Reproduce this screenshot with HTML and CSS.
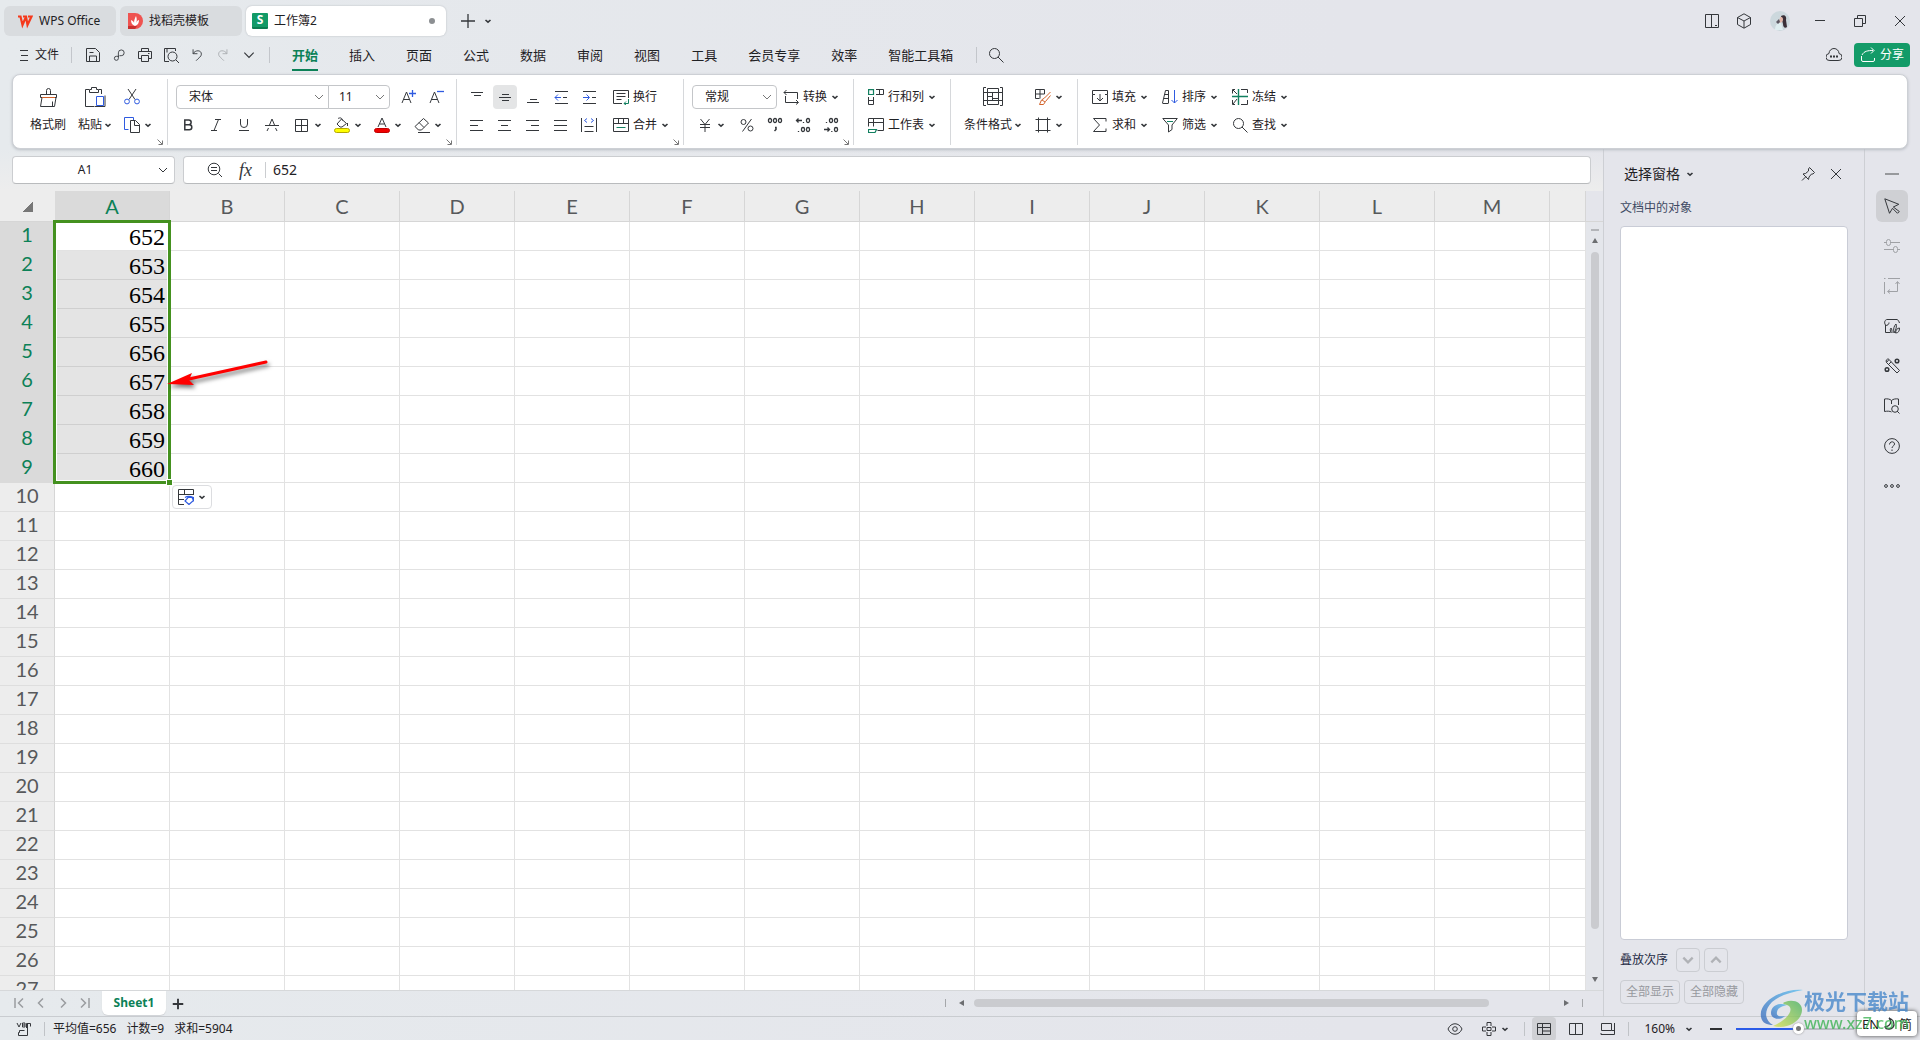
FILE: index.html
```html
<!DOCTYPE html>
<html lang="zh-CN">
<head>
<meta charset="utf-8">
<title>工作簿2 - WPS Office</title>
<link rel="stylesheet" href="styles.css">
</head>
<body>
<svg class="defs" aria-hidden="true">
  <symbol id="chev" viewBox="0 0 8 8"><path d="M1.500 3 4 5.200 6.500 3" stroke-width="1.600"/></symbol>
  <symbol id="chev-l" viewBox="0 0 12 12"><path d="M2 4l4 4 4-4"/></symbol>
  <symbol id="launch" viewBox="0 0 6 6"><path d="M.5.5l4.500 4.500M5.500 1.500v4h-4"/></symbol>
  <symbol id="plus" viewBox="0 0 16 16"><path d="M8 1v14M1 8h14"/></symbol>
  <symbol id="x" viewBox="0 0 16 16"><path d="M3 3l10 10M13 3 3 13"/></symbol>
  <symbol id="wps" viewBox="0 0 16 14"><path d="M1 2.500h2.500l2 8.500L8.500 4M6 2.500h3l1.500 8.500 4-8.500H11" fill="none" stroke="#f5391c" stroke-width="2.200"/></symbol>
  <symbol id="docer" viewBox="0 0 16 16"><path d="M1 0h7a7.500 7.500 0 0 1 0 16H1z" fill="#ef5350" stroke="none"/><path d="M1 13h9l-2 3H1z" fill="#c9302e" stroke="none"/><path d="M8 13C5 12 4 10 4 7c2 1 3 2 3 3 0-3 1-5 2-7 1 3 1 5 0 7 1-2 2-3 3-3 0 3-1 5-4 6z" fill="#fff" stroke="none"/></symbol>
  <symbol id="menu" viewBox="0 0 10 12"><path d="M1 1.500h8M2 6.500h7M1 11.500h8" /></symbol>
  <symbol id="save" viewBox="0 0 16 16"><path d="M1.500 14.500v-13h9l4 4v9zM4.500 14v-5h7v5M4.500 5.500h4"/></symbol>
  <symbol id="link" viewBox="0 0 16 16"><path d="M8 9.500H5a2.300 2.300 0 1 0 2.300 2.300V5.500A3.300 3.300 0 1 1 10.500 8.800H8.500"/></symbol>
  <symbol id="print" viewBox="0 0 16 16"><path d="M4.500 4.500v-3h7v3M4.500 11.500h-3v-7h13v7h-3M4.500 8.500h7v6h-7zM11 6.500h1.500"/></symbol>
  <symbol id="preview" viewBox="0 0 16 16"><path d="M6 14.500H1.500v-13h11V4M4 1.500v4M13 13l3 3"/><circle cx="9.500" cy="9.500" r="4.500"/></symbol>
  <symbol id="undo" viewBox="0 0 16 16"><path d="M3.500 1.500v5h5M3.500 6.500C6 2 13 2 13 7c0 3-3 4-6 7.500"/></symbol>
  <symbol id="redo" viewBox="0 0 16 16"><path d="M12.500 1.500v5h-5M12.500 6.500C10 2 3 2 3 7c0 3 3 4 6 7.500"/></symbol>
  <symbol id="search" viewBox="0 0 16 16"><circle cx="6.500" cy="6.500" r="5"/><path d="M10 10l5.500 5.500"/></symbol>
  <symbol id="panel" viewBox="0 0 16 16"><path d="M1.500 1.500h13v13h-13zM7.500 1.500v13M11 12.500h2"/></symbol>
  <symbol id="cube" viewBox="0 0 16 16"><path d="M8 .8l6.500 3.700v7L8 15.200l-6.500-3.700v-7zM1.500 4.500 8 8l6.500-3.500M8 8v7"/></symbol>
  <symbol id="min" viewBox="0 0 16 16"><path d="M3 7.500h10"/></symbol>
  <symbol id="restore" viewBox="0 0 16 16"><path d="M2.500 5.500h8v8h-8zM5.500 5.500v-3h8v8h-3"/></symbol>
  <symbol id="cloud" viewBox="0 0 16 16"><path d="M4 13.500A3.500 3.500 0 0 1 3 6.500 5 5 0 0 1 13 6.500a3.500 3.500 0 0 1-1 7z"/><path d="M4 9.500h2M7 9.500h2M10 9.500h2" stroke-width="2"/></symbol>
  <symbol id="share" viewBox="0 0 16 16"><path d="M1.500 9v4a1.500 1.500 0 0 0 1.500 1.500h10a1.500 1.500 0 0 0 1.500-1.500v-2M2 8c2-4 6-4.500 11-4.500M11 .5l3 3-3 3"/></symbol>
  <symbol id="brush" viewBox="0 0 20 20"><path d="M8.500 7.500v-4a2 2 0 0 1 4 0v4M2.500 7.500h16v3h-16zM4 10.500l-1.500 9h14l1.500-9M14.500 14.500v5"/><path d="M4 10.500h13" stroke="#d2622a"/></symbol>
  <symbol id="paste" viewBox="0 0 22 20"><path d="M5 2.500H1.500v17h9M15 2.500h2.500V7M5.500 2.500h2v-2h5v2h2v3h-9z"/><path d="M12.500 9.500h7v9h-7z" stroke="#2f5be0"/><path d="M11 19.500h10v-11"/></symbol>
  <symbol id="cut" viewBox="0 0 16 16"><path d="M4 0l7 10.500M12 0 5 10.500"/><circle cx="3" cy="12.500" r="2.400" stroke="#2f5be0"/><circle cx="13" cy="12.500" r="2.400" stroke="#2f5be0"/></symbol>
  <symbol id="copy" viewBox="0 0 16 16"><path d="M4.500 12.500h-4v-12h9V3" stroke="#2f5be0"/><path d="M6.500 3.500h5l4 4v8h-9zM10.500 3.500v5h5"/></symbol>
  <symbol id="aplus" viewBox="0 0 16 16"><path d="M1 14 5.500 3 10 14M2.500 10.500h6"/><path d="M11.500 1v7M8 4.500h7" stroke="#2f5be0" stroke-width="1.300"/></symbol>
  <symbol id="aminus" viewBox="0 0 16 16"><path d="M1 14 5.500 3 10 14M2.500 10.500h6"/><path d="M8 2.500h7" stroke="#2f5be0" stroke-width="1.300"/></symbol>
  <symbol id="bold" viewBox="0 0 16 16"><path d="M4.800 3h4a2.300 2.300 0 0 1 0 4.700h-4zM4.800 7.700h4.500a2.500 2.500 0 0 1 0 5h-4.500z" stroke-width="1.500"/></symbol>
  <symbol id="italic" viewBox="0 0 16 16"><path d="M7 2.500h6M3 13.500h6M10.500 2.500l-4.500 11"/></symbol>
  <symbol id="under" viewBox="0 0 16 16"><path d="M4.500 2v5a3.500 3.500 0 0 0 7 0V2M3 13.500h10"/></symbol>
  <symbol id="strike" viewBox="0 0 16 16"><path d="M1 8.500h14M5.500 8 8 2l2.500 6M3 14l1.500-3M13 14l-1.500-3"/></symbol>
  <symbol id="border" viewBox="0 0 16 16"><path d="M1.500 2.500h12v12h-12zM7.500 2.500v12M1.500 8.500h12"/></symbol>
  <symbol id="fill" viewBox="0 0 16 16"><path d="M7.500 2l5 4.500-4.500 3.500h-2L3 7zM4 1.500c2-1 4-1 4.500 2M13.500 6v3"/><rect x=".5" y="11.500" width="15" height="4" rx="2" fill="#ffff00" stroke="#b5a800"/></symbol>
  <symbol id="fcolor" viewBox="0 0 16 16"><path d="M4 10 8 1l4 9M5.500 7h5"/><rect x=".5" y="11.500" width="15" height="4" rx="2" fill="#f00000" stroke="#c00000"/></symbol>
  <symbol id="eraser" viewBox="0 0 16 16"><path d="M9.500 1.500l5 4.500-7 7H4.500L1 9.500zM5 5.500l5 5M4 15.500h12"/></symbol>
  <symbol id="vtop" viewBox="0 0 16 16"><path d="M2 3.500h12M5 6.500h7"/></symbol>
  <symbol id="vmid" viewBox="0 0 16 16"><path d="M5 5.500h7M2 8.500h12M5 11.500h7"/></symbol>
  <symbol id="vbot" viewBox="0 0 16 16"><path d="M5 10.500h7M2 13.500h12"/></symbol>
  <symbol id="outdent" viewBox="0 0 16 16"><path d="M2 2.500h13M10 8.500h4M2 14.500h13"/><path d="M8 8.500H2M5 5.500l-3 3 3 3" stroke="#2f5be0"/></symbol>
  <symbol id="indent" viewBox="0 0 16 16"><path d="M2 2.500h13M11 8.500h4M2 14.500h13"/><path d="M2 8.500h6M5.500 5.500l3 3-3 3" stroke="#2f5be0"/></symbol>
  <symbol id="left" viewBox="0 0 16 16"><path d="M1 3.500h13M1 8.500h8M1 13.500h13"/></symbol>
  <symbol id="center" viewBox="0 0 16 16"><path d="M1 3.500h13M4 8.500h7M1 13.500h13"/></symbol>
  <symbol id="right" viewBox="0 0 16 16"><path d="M1 3.500h13M6 8.500h8M1 13.500h13"/></symbol>
  <symbol id="just" viewBox="0 0 16 16"><path d="M1 3.500h13M1 8.500h13M1 13.500h13"/></symbol>
  <symbol id="dist" viewBox="0 0 16 16"><path d="M.5 1v14M15.500 1v14M3.500 9.500h9M3.500 14.500h9"/><path d="M6 1.500l-2.500 2 2.500 2M10 1.500l2.500 2-2.500 2" stroke="#2f5be0"/></symbol>
  <symbol id="wrap" viewBox="0 0 16 16"><path d="M15.500 9V1.500H.5v13H9M3.500 4.500h9M3.500 7.500h9M3.500 10.500h5"/><path d="M15.500 10v4.500H11M13 12.500l-2 2 2 1.500" stroke="#128060"/></symbol>
  <symbol id="merge" viewBox="0 0 16 16"><path d="M.5 1.500h15v13H.5zM.5 6.500h15M5.500 1.500v5M10.500 1.500v5"/><path d="M3.500 10.500h9" stroke="#128060"/></symbol>
  <symbol id="convert" viewBox="0 0 16 16"><path d="M3.500 1 1 3.500 3.500 6M1 3.500h13.500V10M2.500 7v6.500H15M13 11l2.500 2.500L13 15.500"/></symbol>
  <symbol id="yen" viewBox="0 0 16 16"><path d="M3.500 2 8 7.500 12.500 2M3 7.500h10M3 10.500h10M8 7.500V15"/></symbol>
  <symbol id="pct" viewBox="0 0 16 16"><circle cx="4.500" cy="5" r="2.500"/><circle cx="11.500" cy="11.500" r="2.500"/><path d="M12.500 2l-9 12.500"/></symbol>
  <symbol id="thou" viewBox="0 0 16 16"><g stroke-width="1.300"><rect x="1.500" y="1.500" width="3" height="4" rx="1.500"/><rect x="6.500" y="1.500" width="3" height="4" rx="1.500"/><rect x="11.500" y="1.500" width="3" height="4" rx="1.500"/></g><path d="M8 10.500h1v2L7.500 14" stroke-width="1.500"/></symbol>
  <symbol id="decinc" viewBox="0 0 16 16"><g stroke-width="1.300"><rect x="11.500" y="1.500" width="3" height="4" rx="1.500"/><rect x="6.500" y="10.500" width="3" height="4" rx="1.500"/><rect x="11.500" y="10.500" width="3" height="4" rx="1.500"/><path d="M3.500 1.500l-2 2 2 2M2 3.500h5M8.500 5v1M3.500 14v1"/></g></symbol>
  <symbol id="decdec" viewBox="0 0 16 16"><g stroke-width="1.300"><rect x="6.500" y="1.500" width="3" height="4" rx="1.500"/><rect x="11.500" y="1.500" width="3" height="4" rx="1.500"/><rect x="11.500" y="10.500" width="3" height="4" rx="1.500"/><path d="M4.500 10.500l2 2-2 2M1 12.500h5M3.500 5v1M8.800 14v1"/></g></symbol>
  <symbol id="rowcol" viewBox="0 0 16 16"><path d="M8 .5h7.500v5H8M11.500.5v5M.5 8v7.500h5V8M.5 11.500h5"/><path d="M.6.600h4.900v4.900H.6z" stroke="#128060" stroke-width="1.200"/></symbol>
  <symbol id="wsheet" viewBox="0 0 16 16"><path d="M.5 9.500v-8h15v12h-6M.5 5.500h15M5.500 1.500v8"/><path d="M.5 12.500h8l-1.500 3H.5z" stroke="#128060" stroke-width="1.200"/></symbol>
  <symbol id="cond" viewBox="0 0 20 20"><path d="M3 .5H.5v18H3M17 .5h2.500v18H17M4.500 1.500h11v4h-11zM4.500 13.500h11v4h-11zM4.500 9.500h5M.5 5.500h4M15.500 5.500h4M.5 13.500h4M15.500 13.500h4M9.500 5.500v4M4.500 5.500v8M15.500 5.500v8M9.500 11.500h6M9.500 9.500v4"/></symbol>
  <symbol id="tstyle" viewBox="0 0 16 16"><path d="M9.500 5V.5H.5v9h4M5 .5v9M.5 5h9"/><path d="M15.500 3 9.500 9l-3 2-2 4.500h4l2-3 5-6M7 11l3 2" stroke="#d2622a"/></symbol>
  <symbol id="cell" viewBox="0 0 16 16"><path d="M3.500.5v15M12.500.5v15M.5 2.500h15M.5 13.500h15"/></symbol>
  <symbol id="fillin" viewBox="0 0 16 16"><path d="M3 5.500H.5v-4h15v4H13M.5 5.500v9h15v-9M8 5v7M5 9l3 3 3-3"/></symbol>
  <symbol id="sum" viewBox="0 0 16 16"><path d="M14 4.500v-3H1.500l6 6.500-6 6.500H14v-3"/></symbol>
  <symbol id="sort" viewBox="0 0 16 16"><path d="M.5 14 3.500 1.500h3V14M.5 14.500h6M2 9.500h4.500M2.500 5.500h4"/><path d="M12.500 1v13M9.500 11l3 3 3-3" stroke="#2f5be0"/></symbol>
  <symbol id="filter" viewBox="0 0 16 16"><path d="M.8 1.500h14.500L10 8v4.500l-3.500 2.500V8z"/><path d="M5 4.500h6" stroke="#128060"/></symbol>
  <symbol id="freeze" viewBox="0 0 16 16"><path d="M3 .5H.5v4M9 .5h6.500V4M.5 11v4.500H3M15.500 11v4.500H9M1 1l4 4M5 10l-4 5"/><path d="M6.500 0v16M0 7.500h16" stroke="#128060" stroke-width="1.400"/></symbol>
  <symbol id="zoomout" viewBox="0 0 16 16"><circle cx="7" cy="7" r="5.800"/><path d="M4 5.500h6M4 8.500h6M11.500 11.500l3.500 3.500"/></symbol>
  <symbol id="pin" viewBox="0 0 16 16"><path d="M9.500 1.500l5 5-1.500 1.500-1.500 0-2.500 3-.5 2.500L3 8l2.500-.5 3-2.500V3zM6 10.500 2 14.500"/></symbol>
  <symbol id="arrow" viewBox="0 0 16 16"><path d="M.8.800l14 5.500-5.500 2.700 6 4.500-1.800 1.800-5-5-3 5z"/></symbol>
  <symbol id="sliders" viewBox="0 0 16 16"><path d="M0 4.500h2M7 4.500h9M0 11.500h9M14 11.500h2"/><rect x="2.500" y="1.500" width="4" height="6" rx="2"/><rect x="9.500" y="8.500" width="4" height="6" rx="2"/></symbol>
  <symbol id="transp" viewBox="0 0 16 16"><path d="M4 .5h12M.5 4v12M0 .5h1.500M13.500 4v9.500H4M11.500 6l2-2.500 2 2.500M6 11.500l-2.500 2L6 15.500"/></symbol>
  <symbol id="shop" viewBox="0 0 16 16"><path d="M6 14.500H1.500V7C-.5 4 1.500 1.500 3 1.500h10c1 0 2 2 2.500 3.500M1.500 7.500c2 0 3.500-1 3.500-3"/><path d="M7 15c-1-3-1-4 0-5 1 1 1 3 1 5M10 15c-1-4 0-7 2-9 1 2 0 6-2 9zM11.500 15c0-3 2-5 4-5 0 3-1 5-4 5z"/></symbol>
  <symbol id="tools" viewBox="0 0 16 16"><path d="M2.500 4.500 5 1.500 15.500 12.500 13 15zM2.500 4.500C1 2 4 0 5 1.500M4.500 6.500 7.200 3.800"/><circle cx="13" cy="3" r="1.800" stroke-width="1.500"/><circle cx="3" cy="11.500" r="1.800" stroke-width="1.500"/></symbol>
  <symbol id="book" viewBox="0 0 16 16"><path d="M7.500 14C6 13 3 13 .5 13.500V1C3 .5 6 1 7.500 2.500 9 1 12 .5 14.500 1v6M7.500 2.500V6M13 13l2.500 2.500"/><circle cx="11" cy="11" r="3.300"/></symbol>
  <symbol id="help" viewBox="0 0 16 16"><circle cx="8" cy="8" r="7.400"/><path d="M5.500 6.500c0-3.500 5-3.500 5-.5C10.500 8 8 8 8 10M8 11.500v1.500"/></symbol>
  <symbol id="more" viewBox="0 0 16 16"><circle cx="2" cy="8" r="1.400"/><circle cx="8" cy="8" r="1.400"/><circle cx="14" cy="8" r="1.400"/></symbol>
  <symbol id="afill" viewBox="0 0 16 16"><path d="M15.500 6V.5H.5v15H6M.5 5.500h15M.5 10.500H6M6.500.5v5"/><path d="M7 8.500c3-2 6-1 8.500 0v4M11 15.500l-4-3.500 3-3.500h4l1.500 3z" stroke="#2f5be0" stroke-width="1.200"/></symbol>
  <symbol id="prev" viewBox="0 0 10 12"><path d="M7 1.500 2.500 6 7 10.500"/></symbol>
  <symbol id="next" viewBox="0 0 10 12"><path d="M3 1.500 7.500 6 3 10.500"/></symbol>
  <symbol id="first" viewBox="0 0 10 12"><path d="M1 1v10M9 1.500 4.500 6 9 10.500"/></symbol>
  <symbol id="last" viewBox="0 0 10 12"><path d="M9 1v10M1 1.500 5.500 6 1 10.500"/></symbol>
  <symbol id="macro" viewBox="0 0 16 16"><path d="M1 2l2 4 2-4M6.500 2h2.500v4H6.500zM6.500 4H9M10.500 7V2.500h4v3M11.500 3v9M3.500 9.500h5M3.500 9.500v2h-1v3h9v-3"/></symbol>
  <symbol id="eye" viewBox="0 0 16 16"><path d="M1 8c3-7 11-7 14 0-3 7-11 7-14 0z"/><circle cx="8" cy="8" r="2.300"/></symbol>
  <symbol id="cross" viewBox="0 0 16 16"><path d="M6 5V1.500h4V5M6 11v3.500h4V11M5 6H1.500v4H5M11 6h3.500v4H11M6 6.500h4v3H6z"/></symbol>
  <symbol id="vnorm" viewBox="0 0 16 16"><path d="M1.500 2.500h13v11h-13zM1.500 6.500h13M6.500 2.500v11M6.500 10h8"/></symbol>
  <symbol id="vpage" viewBox="0 0 16 16"><path d="M1.500 2.500h13v11h-13zM7.500 2.500v11"/></symbol>
  <symbol id="vread" viewBox="0 0 16 16"><path d="M1.500 2.500h10v7h-10zM14.500 2v11.500H1V12M14.500 9.500h-3"/></symbol>
  <symbol id="moon" viewBox="0 0 16 16"><path d="M8 2c3 3 2 8-4 9 1 3 8 3 9-2 0-3-2-6-5-7z" stroke-width="1.300"/></symbol>
</svg>

<header class="titlebar">
  <nav class="doc-tabs">
    <button class="doc-tab home"><svg class="i16"><use href="#wps"/></svg>WPS Office</button>
    <button class="doc-tab docer"><svg class="i16"><use href="#docer"/></svg>找稻壳模板</button>
    <button class="doc-tab current"><span class="s-logo">S</span>工作簿2<span class="dot"></span></button>
  </nav>
  <button class="new-tab" aria-label="新建"><svg class="i16"><use href="#plus"/></svg></button>
  <button class="tab-list" aria-label="标签列表"><svg class="chev"><use href="#chev"/></svg></button>
  <div class="window-tools">
    <button aria-label="侧栏"><svg class="i16"><use href="#panel"/></svg></button>
    <button aria-label="应用"><svg class="i16"><use href="#cube"/></svg></button>
    <button class="avatar-btn" aria-label="账户"><svg class="avatar" viewBox="0 0 20 20"><circle cx="10" cy="10" r="10" fill="#ccd8dd"/><path d="M11 5c3-2 6 0 5 4l1 7c-2 2-4 0-4-3z" fill="#3a3038"/><path d="M10 6.500c2-1 3 0 3 2s-2 4-4 3z" fill="#e3b8ab"/><path d="M5 19c0-5 3-8 6-7l2 7z" fill="#dfeef0"/><path d="M6 11l3-3 1 3-2 2z" fill="#5c5862"/></svg></button>
    <button class="win" aria-label="最小化"><svg class="i16"><use href="#min"/></svg></button>
    <button class="win" aria-label="还原"><svg class="i16"><use href="#restore"/></svg></button>
    <button class="win" aria-label="关闭"><svg class="i16"><use href="#x"/></svg></button>
  </div>
</header>

<div class="menubar">
  <button class="file"><svg class="i-menu"><use href="#menu"/></svg>文件</button>
  <span class="sep"></span>
  <div class="quick">
    <button aria-label="保存"><svg class="i16"><use href="#save"/></svg></button>
    <button aria-label="输出"><svg class="i14"><use href="#link"/></svg></button>
    <button aria-label="打印"><svg class="i16"><use href="#print"/></svg></button>
    <button aria-label="打印预览"><svg class="i16"><use href="#preview"/></svg></button>
    <button aria-label="撤销"><svg class="i14"><use href="#undo"/></svg></button>
    <button aria-label="恢复" class="dim"><svg class="i14"><use href="#redo"/></svg></button>
    <button aria-label="更多"><svg class="i14"><use href="#chev-l"/></svg></button>
  </div>
  <span class="sep"></span>
  <nav class="menu-tabs">
    <a href="#" class="on">开始</a><a href="#">插入</a><a href="#">页面</a><a href="#">公式</a><a href="#">数据</a><a href="#">审阅</a><a href="#">视图</a><a href="#">工具</a><a href="#">会员专享</a><a href="#">效率</a><a href="#">智能工具箱</a>
  </nav>
  <span class="sep"></span>
  <button class="find" aria-label="搜索"><svg class="i16"><use href="#search"/></svg></button>
  <button class="cloud" aria-label="云同步"><svg class="i16"><use href="#cloud"/></svg></button>
  <button class="share"><svg class="i16"><use href="#share"/></svg>分享</button>
</div>

<section class="ribbon" aria-label="开始">
  <div class="group g-clip">
    <div class="blocks">
      <button class="big"><span><svg class="i20"><use href="#brush"/></svg></span><span>格式刷</span></button>
      <button class="big"><span><svg class="i22"><use href="#paste"/></svg></span><span class="lbl">粘贴<svg class="chev"><use href="#chev"/></svg></span></button>
      <div class="stack">
        <div class="row"><button aria-label="剪切"><svg class="i16"><use href="#cut"/></svg></button></div>
        <div class="row"><button class="item" aria-label="复制"><svg class="i16"><use href="#copy"/></svg><svg class="chev"><use href="#chev"/></svg></button></div>
      </div>
    </div>
    <button class="launch" aria-label="剪贴板设置"><svg><use href="#launch"/></svg></button>
  </div>
  <div class="group g-font">
    <div class="stack">
      <div class="row">
        <select class="sel face" aria-label="字体"><option>宋体</option></select><select class="sel size" aria-label="字号"><option>11</option></select>
        <button class="ib28" aria-label="增大字号"><svg class="i16"><use href="#aplus"/></svg></button>
        <button class="ib28" aria-label="减小字号"><svg class="i16"><use href="#aminus"/></svg></button>
      </div>
      <div class="row">
        <button class="ib28" aria-label="加粗"><svg class="i16"><use href="#bold"/></svg></button>
        <button class="ib28" aria-label="倾斜"><svg class="i16"><use href="#italic"/></svg></button>
        <button class="ib28" aria-label="下划线"><svg class="i16"><use href="#under"/></svg></button>
        <button class="ib28" aria-label="删除线"><svg class="i16"><use href="#strike"/></svg></button>
        <div class="row drops">
          <button class="item" aria-label="边框"><svg class="i16"><use href="#border"/></svg><svg class="chev"><use href="#chev"/></svg></button>
          <button class="item" aria-label="填充颜色"><svg class="i16"><use href="#fill"/></svg><svg class="chev"><use href="#chev"/></svg></button>
          <button class="item" aria-label="字体颜色"><svg class="i16"><use href="#fcolor"/></svg><svg class="chev"><use href="#chev"/></svg></button>
          <button class="item" aria-label="清除"><svg class="i16"><use href="#eraser"/></svg><svg class="chev"><use href="#chev"/></svg></button>
        </div>
      </div>
    </div>
    <button class="launch" aria-label="字体设置"><svg><use href="#launch"/></svg></button>
  </div>
  <div class="group g-align">
    <div class="stack">
      <div class="row gap4">
        <button class="ib24" aria-label="顶端对齐"><svg class="i16"><use href="#vtop"/></svg></button>
        <button class="ib24 on" aria-label="垂直居中"><svg class="i16"><use href="#vmid"/></svg></button>
        <button class="ib24" aria-label="底端对齐"><svg class="i16"><use href="#vbot"/></svg></button>
        <button class="ib24" aria-label="减少缩进"><svg class="i16"><use href="#outdent"/></svg></button>
        <button class="ib24" aria-label="增加缩进"><svg class="i16"><use href="#indent"/></svg></button>
        <button class="item after"><svg class="i16"><use href="#wrap"/></svg>换行</button>
      </div>
      <div class="row gap4">
        <button class="ib24" aria-label="左对齐"><svg class="i16"><use href="#left"/></svg></button>
        <button class="ib24" aria-label="居中"><svg class="i16"><use href="#center"/></svg></button>
        <button class="ib24" aria-label="右对齐"><svg class="i16"><use href="#right"/></svg></button>
        <button class="ib24" aria-label="两端对齐"><svg class="i16"><use href="#just"/></svg></button>
        <button class="ib24" aria-label="分散对齐"><svg class="i16"><use href="#dist"/></svg></button>
        <button class="item after"><svg class="i16"><use href="#merge"/></svg>合并<svg class="chev"><use href="#chev"/></svg></button>
      </div>
    </div>
    <button class="launch" aria-label="对齐设置"><svg><use href="#launch"/></svg></button>
  </div>
  <div class="group g-num">
    <div class="stack">
      <div class="row gap6">
        <select class="sel fmt" aria-label="数字格式"><option>常规</option></select>
        <button class="item"><svg class="i16"><use href="#convert"/></svg>转换<svg class="chev"><use href="#chev"/></svg></button>
      </div>
      <div class="row nums">
        <button class="item" aria-label="货币"><svg class="i16"><use href="#yen"/></svg><svg class="chev"><use href="#chev"/></svg></button>
        <button class="ib28" aria-label="百分比"><svg class="i16"><use href="#pct"/></svg></button>
        <button class="ib28" aria-label="千位分隔"><svg class="i16"><use href="#thou"/></svg></button>
        <button class="ib28" aria-label="增加小数位"><svg class="i16"><use href="#decinc"/></svg></button>
        <button class="ib28" aria-label="减少小数位"><svg class="i16"><use href="#decdec"/></svg></button>
      </div>
    </div>
    <button class="launch" aria-label="数字设置"><svg><use href="#launch"/></svg></button>
  </div>
  <div class="group g-cells">
    <div class="stack">
      <div class="row"><button class="item"><svg class="i16"><use href="#rowcol"/></svg>行和列<svg class="chev"><use href="#chev"/></svg></button></div>
      <div class="row"><button class="item"><svg class="i16"><use href="#wsheet"/></svg>工作表<svg class="chev"><use href="#chev"/></svg></button></div>
    </div>
  </div>
  <div class="group g-style">
    <div class="blocks">
      <button class="big"><span><svg class="i20"><use href="#cond"/></svg></span><span class="lbl">条件格式<svg class="chev"><use href="#chev"/></svg></span></button>
      <div class="stack">
        <div class="row"><button class="item" aria-label="表格样式"><svg class="i16"><use href="#tstyle"/></svg><svg class="chev"><use href="#chev"/></svg></button></div>
        <div class="row"><button class="item" aria-label="单元格样式"><svg class="i16"><use href="#cell"/></svg><svg class="chev"><use href="#chev"/></svg></button></div>
      </div>
    </div>
  </div>
  <div class="group g-edit">
    <div class="stack">
      <div class="row gap14">
        <button class="item"><svg class="i16"><use href="#fillin"/></svg>填充<svg class="chev"><use href="#chev"/></svg></button>
        <button class="item"><svg class="i16"><use href="#sort"/></svg>排序<svg class="chev"><use href="#chev"/></svg></button>
        <button class="item"><svg class="i16"><use href="#freeze"/></svg>冻结<svg class="chev"><use href="#chev"/></svg></button>
      </div>
      <div class="row gap14">
        <button class="item"><svg class="i16"><use href="#sum"/></svg>求和<svg class="chev"><use href="#chev"/></svg></button>
        <button class="item"><svg class="i16"><use href="#filter"/></svg>筛选<svg class="chev"><use href="#chev"/></svg></button>
        <button class="item"><svg class="i16"><use href="#search"/></svg>查找<svg class="chev"><use href="#chev"/></svg></button>
      </div>
    </div>
  </div>
</section>

<main class="work">
  <section class="book">
    <div class="formula-row">
      <div class="name-box"><input aria-label="名称框" value="A1"><svg class="i12"><use href="#chev-l"/></svg></div>
      <div class="formula-box">
        <svg class="i16"><use href="#zoomout"/></svg><i class="fx">fx</i><span class="fsep"></span>
        <input aria-label="编辑栏" value="652">
      </div>
    </div>
    <div class="sheet">
      <div class="grid-wrap">
        <table class="grid" id="grid"></table>
        <div class="selection"><span class="handle"></span></div>
        <button class="autofill" aria-label="自动填充选项"><svg class="i16"><use href="#afill"/></svg><svg class="chev"><use href="#chev"/></svg></button>
        <svg class="pointer" viewBox="0 0 104 32"><path d="M100 3 23 20" stroke="#f00" stroke-width="3" stroke-linecap="round"/><path d="M1 25 26 14 23 21 28 26z" fill="#f00"/></svg>
      </div>
      <div class="vscroll"><span class="split"></span><span class="tri up"></span><span class="vthumb"></span><span class="tri down"></span></div>
    </div>
    <div class="sheetbar">
      <div class="sheet-nav">
        <button aria-label="第一个"><svg><use href="#first"/></svg></button>
        <button aria-label="上一个"><svg><use href="#prev"/></svg></button>
        <button aria-label="下一个"><svg><use href="#next"/></svg></button>
        <button aria-label="最后一个"><svg><use href="#last"/></svg></button>
      </div>
      <button class="sheet-tab">Sheet1</button>
      <button class="add-sheet" aria-label="新建工作表"><svg class="i12"><use href="#plus"/></svg></button>
      <div class="hscroll"><span class="bar"></span><span class="tri lt"></span><span class="hthumb"></span><span class="tri rt"></span><span class="bar"></span></div>
    </div>
  </section>
  <aside class="pane">
    <div class="pane-head"><h2>选择窗格</h2><svg class="chev"><use href="#chev"/></svg>
      <button aria-label="固定"><svg class="i16"><use href="#pin"/></svg></button><button aria-label="关闭窗格"><svg class="i16"><use href="#x"/></svg></button></div>
    <p class="pane-sub">文档中的对象</p>
    <div class="objects"></div>
    <div class="order"><span>叠放次序</span><button aria-label="下移"><svg class="i14"><use href="#chev-l"/></svg></button><button class="flip" aria-label="上移"><svg class="i14"><use href="#chev-l"/></svg></button></div>
    <div class="show"><button>全部显示</button><button>全部隐藏</button></div>
  </aside>
  <nav class="rail" aria-label="任务窗格">
    <span class="rail-min"></span>
    <button class="on" aria-label="选择"><svg class="i16"><use href="#arrow"/></svg></button>
    <button class="off" aria-label="属性"><svg class="i16"><use href="#sliders"/></svg></button>
    <button class="off" aria-label="转置"><svg class="i16"><use href="#transp"/></svg></button>
    <button aria-label="稻壳资源"><svg class="i16"><use href="#shop"/></svg></button>
    <button aria-label="工具"><svg class="i16"><use href="#tools"/></svg></button>
    <button aria-label="查阅"><svg class="i16"><use href="#book"/></svg></button>
    <button aria-label="帮助"><svg class="i16"><use href="#help"/></svg></button>
    <button aria-label="更多"><svg class="i16"><use href="#more"/></svg></button>
  </nav>
</main>

<footer class="status">
  <svg class="i16"><use href="#macro"/></svg><span class="ssep"></span>
  <span class="stat">平均值=656</span><span class="stat">计数=9</span><span class="stat">求和=5904</span>
  <div class="views">
    <button aria-label="护眼"><svg class="i16"><use href="#eye"/></svg></button>
    <button class="item aim" aria-label="阅读定位"><svg class="i16"><use href="#cross"/></svg><svg class="chev"><use href="#chev"/></svg></button>
    <span class="ssep"></span>
    <button class="view on" aria-label="普通视图"><svg class="i16"><use href="#vnorm"/></svg></button>
    <button class="view" aria-label="分页预览"><svg class="i16"><use href="#vpage"/></svg></button>
    <button class="view" aria-label="阅读视图"><svg class="i16"><use href="#vread"/></svg></button>
    <span class="ssep"></span>
    <button class="zoom-val">160%<svg class="chev"><use href="#chev"/></svg></button>
    <button class="zoom-minus" aria-label="缩小"></button>
    <input class="zoom" type="range" min="0" max="100" value="53" aria-label="缩放">
  </div>
</footer>

<div class="ime">EN<svg class="i16"><use href="#moon"/></svg>简</div>
<div class="mark">
  <svg class="mark-logo" viewBox="0 0 44 42"><defs><linearGradient id="mb" x1="0" y1="1" x2="1" y2="0"><stop offset="0" stop-color="#2f62b8"/><stop offset="1" stop-color="#55bdf0"/></linearGradient><linearGradient id="mg" x1="0" y1="1" x2="1" y2="0"><stop offset="0" stop-color="#d8e04a"/><stop offset="1" stop-color="#3faf5c"/></linearGradient></defs><path d="M43 2C22 0-2 14 1 29c1 6 6 8 12 8C4 32 4 22 12 14 20 7 32 4 43 2z" fill="url(#mb)"/><path d="M27 17c-8-3-16 1-16 8 0 6 9 8 14 3-5 1-9 0-8-4 1-5 6-6 10-7z" fill="url(#mb)"/><path d="M25 14c-3 1-2 2 2 3 8 3 2 14-14 21 16 4 29-6 29-16 0-8-9-11-17-8z" fill="url(#mg)"/></svg>
  <div class="mark-text"><b>极光下载站</b><span>www.xz7.com</span></div>
</div>
<script src="grid.js"></script>
</body>
</html>
```
FILE: styles.css
```css
* { box-sizing: border-box; }
body {
  margin: 0;
  height: 100vh;
  display: flex;
  flex-direction: column;
  overflow: hidden;
  font: 12px/16px "Noto Sans", "Noto Sans CJK SC", sans-serif;
  color: #1f2124;
  background: linear-gradient(90deg, #e6eaed, #e4e5eb 70%);
}
button, select, input { font: inherit; color: inherit; margin: 0; }
button { display: flex; align-items: center; justify-content: center; padding: 0; border: 0; background: none; white-space: nowrap; }
a { color: inherit; text-decoration: none; }
svg { display: block; flex: none; fill: none; stroke: #34373b; stroke-width: 1; }
.defs { position: absolute; width: 0; height: 0; }
.i12 { width: 12px; height: 12px; }
.i14 { width: 14px; height: 14px; }
.i16 { width: 16px; height: 16px; }
.i20 { width: 20px; height: 20px; }
.i22 { width: 22px; height: 20px; }
.chev { width: 8px; height: 8px; }

/* title bar */
.titlebar { display: flex; align-items: center; height: 40px; padding: 2px 0 0 4px; }
.doc-tabs { display: flex; gap: 4px; }
.doc-tab { justify-content: flex-start; gap: 6px; height: 30px; border-radius: 6px; background: #d9dcdf; }
.home { width: 112px; padding-left: 13px; }
.docer { width: 122px; padding-left: 7px; }
.current { width: 200px; padding: 0 11px 0 6px; background: #fff; box-shadow: 0 0 2px #b3b7bc; }
.s-logo { width: 16px; height: 16px; background: #129a67; border-bottom: 2px solid #0c7c50; border-radius: 1px; color: #fff; font-weight: 700; line-height: 14px; text-align: center; }
.dot { width: 6px; height: 6px; margin-left: auto; border-radius: 3px; background: #8c8f92; }
.new-tab { width: 28px; height: 28px; margin-left: 8px; }
.new-tab svg { stroke-width: 1.3; }
.tab-list { width: 12px; height: 20px; }
.window-tools { display: flex; align-items: center; margin-left: auto; }
.window-tools button { width: 32px; height: 28px; }
.window-tools .avatar-btn { width: 40px; }
.window-tools .win { width: 40px; }
.avatar { width: 20px; height: 20px; stroke: none; }

/* menu bar */
.menubar { display: flex; align-items: center; height: 34px; padding: 0 10px 4px 19px; }
.file { gap: 6px; margin-right: 12px; }
.i-menu { width: 10px; height: 12px; }
.sep { width: 1px; height: 16px; background: #c3c6cb; }
.quick { display: flex; margin: 0 7px 0 8px; }
.quick button { width: 26px; height: 24px; }
.dim { opacity: .35; }
.menu-tabs { display: flex; gap: 31px; margin: 0 23px 0 22px; padding-top: 2px; font-size: 13px; }
.menu-tabs a { height: 28px; line-height: 24px; margin-bottom: -2px; }
.menu-tabs .on { color: #0c8157; font-weight: 700; border-bottom: 2px solid #0c8157; }
.find { width: 16px; margin-left: 11px; }
.cloud { width: 16px; margin: 0 12px 0 auto; }
.share { width: 56px; height: 24px; gap: 4px; border-radius: 4px; background: #139b68; color: #fff; }
.share svg { stroke: #fff; }

/* ribbon */
.ribbon { display: flex; align-items: flex-start; height: 75px; margin: 0 12px; padding: 4px 0; border: 1px solid #cdd0d5; border-radius: 8px; background: #fff; box-shadow: 0 1px 3px #b9bdc3; position: relative; }
.group { display: flex; flex-direction: column; height: 66px; padding-top: 4px; border-right: 1px solid #d6d8db; }
.group:last-child { border-right: 0; }
.blocks { display: flex; }
.row { display: flex; align-items: center; height: 28px; }
.big { flex-direction: column; }
.big > span { display: flex; align-items: center; justify-content: center; height: 28px; }
.item { gap: 4px; }
.big .lbl { gap: 2px; }
.g-clip { width: 155px; padding-left: 17px; }
.g-clip .blocks { gap: 12px; }
.g-font { width: 289px; padding-left: 6px; }
.g-align { width: 227px; padding-left: 8px; }
.g-num { width: 170px; padding-left: 8px; }
.g-cells { width: 97px; padding-left: 14px; }
.g-style { width: 127px; padding-left: 13px; }
.g-style .blocks { gap: 13px; }
.g-edit { padding-left: 14px; }
.gap4 { gap: 4px; }
.gap6 { gap: 6px; }
.gap14 { gap: 14px; }
.drops { gap: 12px; margin-left: 8px; }
.after { margin-left: 8px; }
.nums { padding-left: 5px; }
.nums .item { margin-right: 8px; }
.ib28 { width: 28px; height: 24px; }
.ib24 { width: 24px; height: 24px; }
.ib24.on { border-radius: 4px; background: #e4e5e6; }
.launch { align-self: flex-end; margin-right: 4px; }
.launch svg { width: 6px; height: 6px; stroke: #777; }
.sel {
  appearance: none; height: 24px; padding: 0 0 0 12px; border: 1px solid #c4c6c9; border-radius: 4px; outline: 0;
  background: #fff url("data:image/svg+xml,%3Csvg xmlns='http://www.w3.org/2000/svg' width='10' height='8'%3E%3Cpath d='M1 2l4 4 4-4' fill='none' stroke='%23777'/%3E%3C/svg%3E") no-repeat right 4px center;
}
.face { width: 153px; margin-left: 2px; border-radius: 4px 0 0 4px; }
.size { width: 62px; margin: 0 5px 0 -1px; padding-left: 10px; border-radius: 0 4px 4px 0; }
.fmt { width: 85px; }

/* work area */
.work { display: flex; flex: 1; min-height: 0; }
.book { display: flex; flex: 1; flex-direction: column; min-width: 0; background: linear-gradient(transparent, #ededed 42px, transparent 42px); }
.formula-row { display: flex; gap: 8px; padding: 7px 12px 7px; }
.name-box, .formula-box { display: flex; align-items: center; height: 28px; border: 1px solid #cbcdd0; border-bottom-color: #b9bbbd; border-radius: 4px; background: #fff; }
.name-box { width: 163px; padding-right: 5px; }
.name-box input { flex: 1; min-width: 0; padding: 0; border: 0; background: none; text-align: center; outline: 0; }
.formula-box { flex: 1; padding-left: 23px; }
.fx { margin-left: 16px; width: 16px; font: italic 18px/20px "Liberation Serif", serif; color: #34373b; }
.fsep { width: 1px; height: 16px; margin: 0 7px 0 10px; background: #cbcdd0; }
.formula-box input { flex: 1; min-width: 0; padding: 0; border: 0; outline: 0; font-size: 14px; background: none; }
.sheet { display: flex; flex: 1; min-height: 0; }
.grid-wrap { position: relative; flex: 1; min-width: 0; overflow: hidden; background: #fff; }
.grid { width: 100%; table-layout: fixed; border-spacing: 0; }
.grid th, .grid td { padding: 0; height: 29px; border-right: 1px solid #e2e2e2; border-bottom: 1px solid #e2e2e2; }
.grid th { font: 20px/24px Lato, "Noto Sans", sans-serif; color: #57595b; background: #ededed; border-color: #d6d6d6; }
.grid tbody th { padding-bottom: 4px; border-bottom-color: #dedede; }
.grid thead th { height: 31px; padding-bottom: 1px; }
.grid .corner-col { width: 55px; }
.grid .col { width: 115px; }
.grid thead th:first-child { border-right: 0; }
.grid th.hot { color: #0c8157; background: #dadada; border-bottom-color: #dadada; }
.grid td { font: 24px/26px "Liberation Serif", serif; text-align: right; vertical-align: bottom; padding-right: 4px; color: #000; }
.grid td.picked { background: #e4e4e4; border-bottom-color: #cfcfcf; }
.corner { display: block; width: 10px; height: 10px; margin: 2px 0 0 23px; background: linear-gradient(135deg, transparent 50%, #777 50%); }
.selection { position: absolute; left: 53px; top: 29px; width: 118px; height: 264px; border: 3px solid #44911f; box-shadow: inset 0 0 0 1px #fff; }
.handle { position: absolute; right: -5px; bottom: -5px; width: 7px; height: 7px; border: 1px solid #fff; background: #44911f; }
.autofill { position: absolute; left: 172px; top: 294px; width: 40px; height: 24px; gap: 4px; border: 1px solid #dcdde0; border-radius: 4px; background: #fff; }
.pointer { position: absolute; left: 166px; top: 168px; width: 104px; height: 32px; stroke: none; overflow: visible; filter: drop-shadow(2px 3px 2px #0008); }
.vscroll { display: flex; flex-direction: column; align-items: center; width: 17px; margin-top: 30px; padding: 7px 0 8px; border-top: 1px solid #d6d6d6; background: #e4e6eb; }
.split { width: 8px; height: 2px; background: #b3b5b9; }
.tri { border: 3px solid transparent; }
.up { margin: 7px 0 9px; border-bottom: 5px solid #6c6e71; border-top: 0; }
.vthumb { flex: 1; width: 8px; margin-bottom: 48px; border-radius: 4px; background: #cacbcf; }
.down { border-top: 5px solid #6c6e71; border-bottom: 0; }

/* sheet tabs */
.sheetbar { display: flex; align-items: flex-start; height: 26px; border-top: 1px solid #d6d8da; }
.sheet-nav { display: flex; gap: 12px; padding: 6px 12px 0 14px; }
.sheet-nav svg { width: 10px; height: 12px; stroke: #9a9da0; stroke-width: 1.5; }
.sheet-tab { width: 64px; height: 24px; border-radius: 0 0 6px 6px; background: #fff; color: #0c8157; font-weight: 700; box-shadow: 0 1px 1px #d0d3d6; }
.add-sheet { width: 24px; height: 26px; }
.add-sheet svg { stroke-width: 2.5; }
.hscroll { display: flex; align-items: center; flex: 0 0 658px; height: 24px; margin-left: auto; padding-right: 20px; }
.bar { width: 1px; height: 8px; background: #a5a7aa; }
.lt { margin: 0 10px 0 13px; border-right: 5px solid #6c6e71; border-left: 0; }
.rt { margin: 0 13px 0 75px; border-left: 5px solid #6c6e71; border-right: 0; }
.hthumb { flex: 1; height: 8px; border-radius: 4px; background: #cacbcf; }

/* selection pane */
.pane { display: flex; flex-direction: column; width: 261px; padding: 13px 16px 12px 16px; border-left: 1px solid #cdcfd4; }
.pane-head { display: flex; align-items: center; height: 24px; padding-left: 4px; }
.pane-head h2 { margin: 0 6px 0 0; font-size: 14px; font-weight: 400; }
.pane-head .chev { margin-right: auto; }
.pane-head button { width: 28px; }
.pane-head button:last-child { margin-right: -2px; }
.pane-sub { margin: 12px 0 8px; line-height: 20px; color: #3f4a63; }
.objects { flex: 1; border: 1px solid #c9ccd6; border-radius: 4px; background: #fff; }
.order, .show { display: flex; align-items: center; gap: 4px; height: 24px; margin-top: 8px; color: #1e2a44; }
.order span { margin-right: 4px; }
.order button, .show button { height: 24px; border: 1px solid #cbcdd2; border-radius: 4px; color: #97999e; }
.order button { width: 24px; }
.order svg { stroke: #b0b2b6; stroke-width: 2; }
.flip svg { transform: rotate(180deg); }
.show button { width: 60px; }

/* right rail */
.rail { display: flex; flex-direction: column; align-items: center; gap: 8px; width: 56px; padding: 24px 2px 0 0; border-left: 1px solid #cdcfd4; }
.rail-min { width: 14px; height: 2px; margin-bottom: 7px; background: #97999c; }
.rail button { width: 32px; height: 32px; border-radius: 6px; }
.rail .on { background: #cfd0d4; }
.rail .off svg { stroke: #9fa1a5; }

/* status bar */
.status { display: flex; align-items: center; height: 24px; padding: 0 66px 0 16px; border-top: 1px solid #c9ccd0; }
.ssep { width: 1px; height: 14px; margin: 0 8px 0 12px; background: #c0c3c7; }
.stat { margin-right: 10px; }
.views { display: flex; align-items: center; margin-left: auto; }
.aim { margin-left: 18px; }
.views .ssep { margin: 0 7px 0 15px; }
.view { width: 24px; height: 24px; margin-right: 8px; border-radius: 4px; }
.view.on { background: #cfd0d4; }
.views .view + .ssep { margin: 0 15px 0 0; }
.zoom-val { gap: 10px; }
.zoom-minus { width: 12px; height: 2px; margin: 0 14px 0 17px; background: #2c2e31; }
.zoom { appearance: none; width: 118px; height: 12px; background: linear-gradient(90deg, #2b5be8 53%, #b9bcc3 53%) no-repeat center / 100% 2px; }
.zoom::-webkit-slider-thumb { appearance: none; width: 11px; height: 11px; border: 3px solid #fff; border-radius: 50%; background: #777; box-shadow: 0 0 2px #888; }

/* desktop overlays */
.ime { position: absolute; right: 3px; bottom: 4px; display: flex; align-items: center; justify-content: center; gap: 2px; width: 60px; height: 25px; border-radius: 4px; background: #fff; box-shadow: 0 0 4px #444; font-size: 13px; }
.mark { position: absolute; right: 11px; bottom: 8px; display: flex; opacity: .75; }
.mark-logo { width: 44px; height: 42px; stroke: none; }
.mark-text { display: flex; flex-direction: column; }
.mark-text b { font-size: 21px; line-height: 26px; color: #3f83c9; }
.mark-text span { font-size: 16px; line-height: 18px; font-weight: 500; color: #35b04c; }
```
FILE: grid.js
```javascript
const columns = "ABCDEFGHIJKLM".split("");
const values = [652, 653, 654, 655, 656, 657, 658, 659, 660];
const cols = '<col class="corner-col">' + columns.map(() => '<col class="col">').join("") + "<col>";
const head = '<th><span class="corner"></span></th>' +
  columns.map((c, i) => `<th scope="col"${i ? "" : ' class="hot"'}>${c}</th>`).join("") + "<th></th>";
let body = "";
for (let r = 0; r < 27; r++) {
  const used = r < values.length;
  body += `<tr><th scope="row"${used ? ' class="hot"' : ""}>${r + 1}</th>`;
  body += `<td${used && r ? ' class="picked"' : ""}>${used ? values[r] : ""}</td>`;
  body += "<td></td>".repeat(columns.length) + "</tr>";
}
document.getElementById("grid").innerHTML =
  `<colgroup>${cols}</colgroup><thead><tr>${head}</tr></thead><tbody>${body}</tbody>`;
```
